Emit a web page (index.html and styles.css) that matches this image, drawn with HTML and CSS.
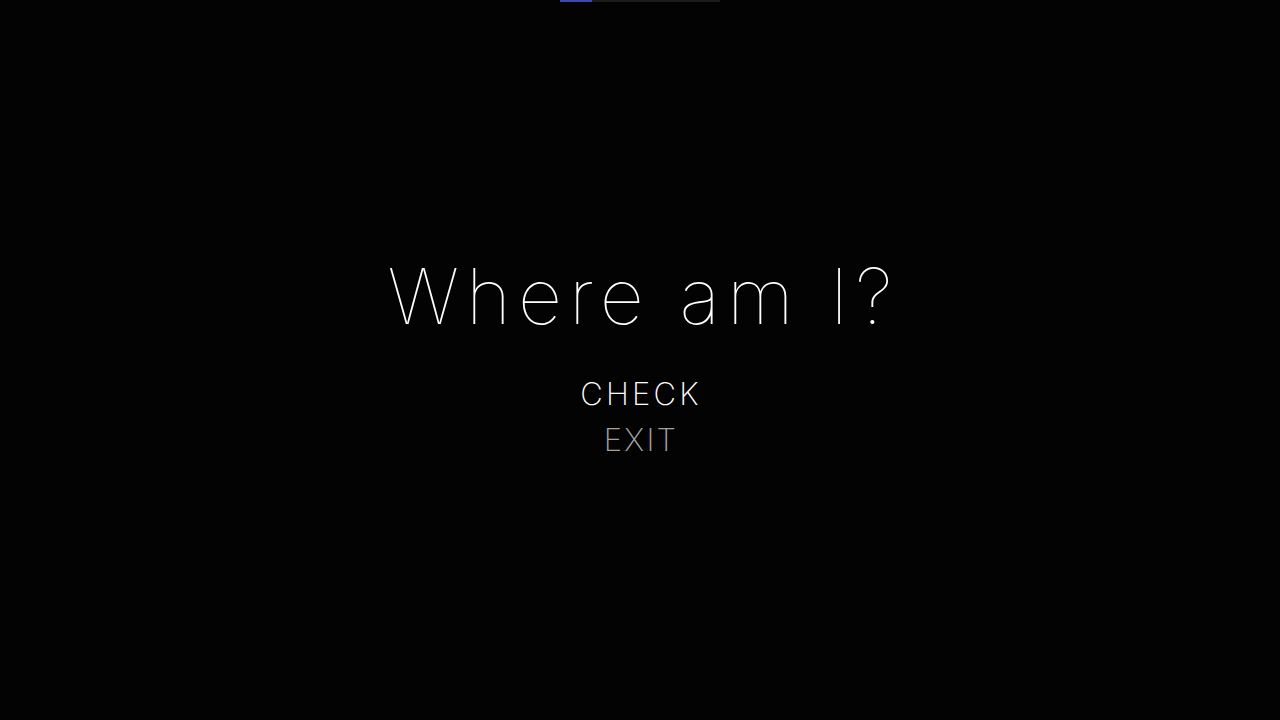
FILE: index.html
```html
<!DOCTYPE html>
<html>
<head>
<meta charset="utf-8">
<link rel="stylesheet" href="styles.css">
</head>
<body>
<div class="progress"><div class="progress-fill"></div></div>
<main class="menu">
  <h1 class="title">Where am I?</h1>
  <nav class="options">
    <div class="option active">CHECK</div>
    <div class="option">EXIT</div>
  </nav>
</main>
</body>
</html>
```
FILE: styles.css
```css
html, body {
  margin: 0;
  height: 100%;
  background: #030303;
}
body {
  font-family: Inter, "Open Sans", sans-serif;
  color: #fff;
  position: relative;
  overflow: hidden;
}
.progress {
  position: absolute;
  top: 0;
  left: 560px;
  width: 160px;
  height: 2px;
  background: #1c1c1e;
}
.progress-fill {
  width: 32px;
  height: 100%;
  background: #3a4bb0;
}
.menu {
  height: 100%;
  display: flex;
  flex-direction: column;
  align-items: center;
  padding-top: 250px;
  box-sizing: border-box;
}
.title {
  margin: 0 0 0 7px;
  font-weight: 100;
  font-size: 77px;
  letter-spacing: 7px;
  line-height: 92px;
}
.options {
  margin-top: 29px;
  display: flex;
  flex-direction: column;
  align-items: center;
}
.option {
  font-size: 31px;
  font-weight: 200;
  letter-spacing: 2.2px;
  line-height: 46px;
  margin-left: 2px;
  color: #a3a3a3;
}
.option.active {
  color: #fff;
  letter-spacing: 3.2px;
}
```
